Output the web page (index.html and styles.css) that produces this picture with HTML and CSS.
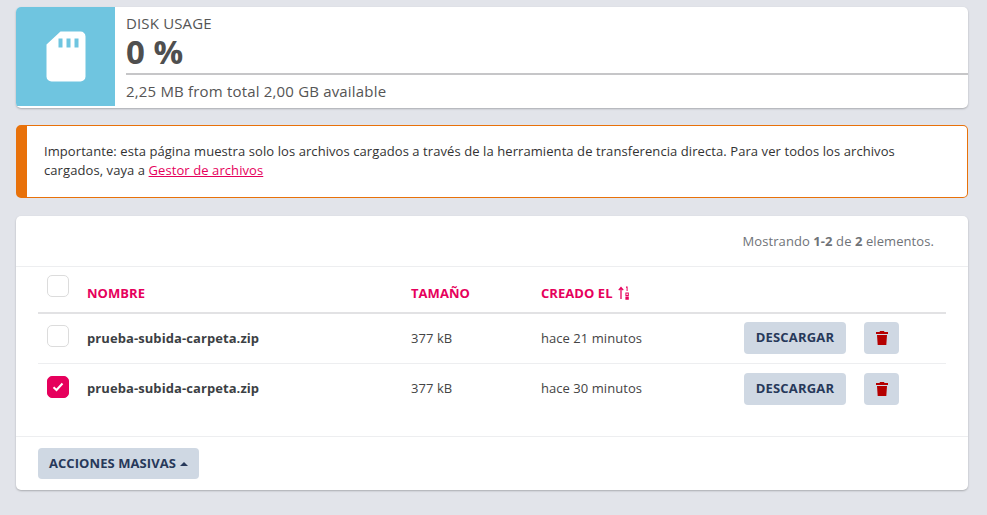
FILE: index.html
```html
<!DOCTYPE html>
<html lang="es">
<head>
<meta charset="utf-8">
<title>Disk usage</title>
<link rel="stylesheet" href="styles.css">
</head>
<body>
<main class="page">
  <section class="usage card">
    <div class="usage-icon">
      <svg width="40" height="51" viewBox="0 0 40 51"><path fill="#fff" d="M14 0H34a5 5 0 0 1 5 5V45a5 5 0 0 1-5 5H5a5 5 0 0 1-5-5V13ZM12 7v9h4V7ZM20 7v9h4V7ZM28 7v9h4V7Z" fill-rule="evenodd" transform="translate(.5 .5)"/></svg>
    </div>
    <div class="usage-body">
      <div class="usage-title">DISK USAGE</div>
      <div class="usage-value">0 %</div>
      <div class="usage-detail">2,25 MB from total 2,00 GB available</div>
    </div>
  </section>

  <section class="notice">
    <p>Importante: esta página muestra solo los archivos cargados a través de la herramienta de transferencia directa. Para ver todos los archivos cargados, vaya a <a href="#">Gestor de archivos</a></p>
  </section>

  <section class="files card">
    <div class="summary">Mostrando <b>1-2</b> de <b>2</b> elementos.</div>
    <div class="table">
      <div class="row head">
        <span class="cb cb-head"></span>
        <span class="c-name">NOMBRE</span>
        <span class="c-size">TAMAÑO</span>
        <span class="c-date">CREADO EL
          <svg class="sort" width="12" height="14" viewBox="0 0 12 14"><path d="M3 13V2M.8 4.2 3 1.5l2.2 2.7" fill="none" stroke="#e6005c" stroke-width="1.3"/><path fill="#e6005c" d="M8 .5h1.6v4.6H8.6V1.7H8ZM7.4 6.4h3.4v3.8H7.4ZM8.4 7.4v1.6h1.4V7.4ZM7.4 10.8h3.4v3H7.4Z"/></svg>
        </span>
      </div>
      <div class="row item">
        <span class="cb"></span>
        <span class="c-name file">prueba-subida-carpeta.zip</span>
        <span class="c-size">377 kB</span>
        <span class="c-date">hace 21 minutos</span>
        <button class="btn">DESCARGAR</button>
        <button class="btn trash"><svg width="12" height="14" viewBox="0 0 12 14"><path fill="#b50000" d="M4 0h4l.5 1H12v2H0V1h3.5ZM1 4h10l-.7 10H1.7Z"/></svg></button>
      </div>
      <div class="row item last">
        <span class="cb checked"><svg width="12" height="10" viewBox="0 0 12 10"><path d="M1.5 5.2 4.5 8l6-6.5" fill="none" stroke="#fff" stroke-width="2"/></svg></span>
        <span class="c-name file">prueba-subida-carpeta.zip</span>
        <span class="c-size">377 kB</span>
        <span class="c-date">hace 30 minutos</span>
        <button class="btn">DESCARGAR</button>
        <button class="btn trash"><svg width="12" height="14" viewBox="0 0 12 14"><path fill="#b50000" d="M4 0h4l.5 1H12v2H0V1h3.5ZM1 4h10l-.7 10H1.7Z"/></svg></button>
      </div>
    </div>
    <div class="footer">
      <button class="btn bulk">ACCIONES MASIVAS<i class="caret"></i></button>
    </div>
  </section>
</main>
</body>
</html>
```
FILE: styles.css
```css
* { box-sizing: border-box; }
html, body { margin: 0; height: 100%; }
body {
  background: #e2e4ea;
  color: #4d4d4d;
  font-family: "Open Sans", "Liberation Sans", sans-serif;
  font-size: 13px;
  letter-spacing: .05px;
  overflow: hidden;
}
.page { padding: 7px 19px 0 16px; }
.card {
  background: #fff;
  border-radius: 5px;
  box-shadow: 0 1px 2px rgba(0, 0, 0, .25);
}
.usage { display: flex; height: 101px; padding-bottom: 2px; overflow: hidden; }
.usage-icon {
  width: 99px;
  background: #6fc5e0;
  display: flex;
  align-items: center;
  justify-content: center;
  padding-left: 1px;
}
.usage-body { flex: 1; padding-left: 11px; }
.usage-title { font-size: 15px; letter-spacing: .15px; line-height: 20px; padding-top: 6px; height: 27px; color: #555; }
.usage-value {
  font-size: 33px;
  font-weight: 700;
  line-height: 36px;
  height: 41px;
  border-bottom: 2px solid #c6c6c8;
  color: #4f4f4f;
}
.usage-detail { font-size: 15px; letter-spacing: .18px; line-height: 20px; padding-top: 6px; color: #555; }

.notice {
  margin-top: 17px;
  height: 73px;
  background: #fff;
  border: 1px solid #e8710a;
  border-left-width: 11px;
  border-radius: 5px;
  padding: 16px 24px 15px 17px;
  color: #333;
  letter-spacing: .08px;
}
.notice p { margin: 0; line-height: 19px; }
.notice a { color: #e6005c; }

.files { margin-top: 18px; height: 274px; }
.summary {
  height: 51px;
  border-bottom: 1px solid #edeef0;
  padding: 16px 34px 0 0;
  text-align: right;
  line-height: 18px;
  color: #6f7378;
  letter-spacing: .08px;
}
.table { margin: 0 22px; }
.row { display: flex; align-items: center; padding-left: 9px; }
.head { height: 47px; border-bottom: 2px solid #e2e2e4; font-weight: 700; color: #e6005c; padding-top: 7px; }
.item { height: 50px; border-bottom: 1px solid #edeef0; color: #444; padding-bottom: 2px; }
.item.last { border-bottom: 0; }
.item.last .btn { margin-top: 1px; }
.cb {
  width: 22px;
  height: 22px;
  flex: none;
  border: 1px solid #dcdcdc;
  border-radius: 5px;
  background: #fff;
  margin: -3px 18px 0 0;
}
.cb-head { margin-top: -14px; }
.checked {
  background: #e6005c;
  border-color: #e6005c;
  display: flex;
  align-items: center;
  justify-content: center;
}
.c-name { width: 324px; flex: none; }
.c-size { width: 130px; flex: none; }
.c-date { width: 203px; flex: none; display: flex; align-items: center; gap: 5px; }
.file { font-weight: 700; color: #3c3f44; letter-spacing: .08px; }
.sort { display: block; }
.btn {
  height: 32px;
  border: 0;
  border-radius: 4px;
  background: #cfd8e3;
  color: #27395a;
  font: 700 13px/1 "Open Sans", "Liberation Sans", sans-serif;
  letter-spacing: .2px;
  padding: 0;
  flex: none;
  width: 102px;
}
.trash {
  width: 35px;
  margin-left: 18px;
  display: flex;
  align-items: center;
  justify-content: center;
}
.footer { margin-top: 22px; border-top: 1px solid #edeef0; padding: 11px 22px; }
.bulk { width: 161px; height: 31px; display: flex; align-items: center; justify-content: center; letter-spacing: .08px; }
.caret {
  margin-left: 4px;
  width: 0;
  height: 0;
  border: 4px solid transparent;
  border-top: 0;
  border-bottom-color: #27395a;
}
```
